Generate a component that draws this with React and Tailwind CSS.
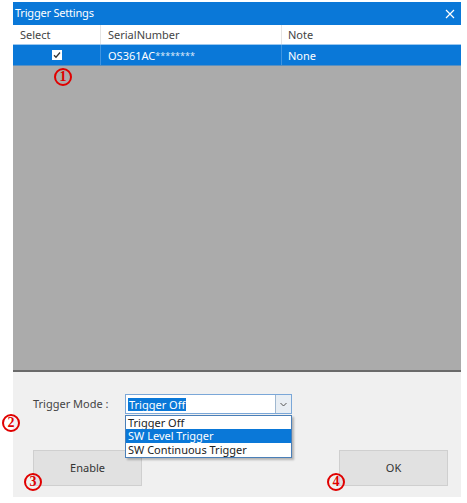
import React from "react";

const F = { fontFamily: '"Noto Sans", "Open Sans", sans-serif' };

function Mark({ children, className }) {
  return (
    <div
      className={
        "absolute w-[18px] h-[18px] rounded-full border-[2px] border-[#e00000] flex items-center justify-center text-[14px] leading-none font-bold text-[#e00000] " +
        className
      }
      style={{ fontFamily: '"Liberation Serif", serif' }}
    >
      {children}
    </div>
  );
}

export default function App() {
  return (
    <div className="relative w-[467px] h-[503px] bg-white overflow-hidden" style={F}>
      <div className="ml-[13px] pt-[2px] w-[448px] h-[497px] flex flex-col">
        {/* Title bar */}
        <div className="h-[23px] bg-[#0a78d8] flex items-center justify-between pl-[2px] pr-[6px]">
          <span className="text-[11px] text-white tracking-[-0.2px]">Trigger Settings</span>
          <svg width="10" height="10" viewBox="0 0 10 10">
            <path d="M1 1L9 9M9 1L1 9" stroke="white" strokeWidth="1.2" />
          </svg>
        </div>
        {/* Header */}
        <div className="h-[20px] bg-white flex text-[11px] text-[#444] border-b border-[#9cc8ef]">
          <div className="w-[87px] pl-[7px] flex items-center pt-[1px]">Select</div>
          <div className="w-px bg-[#e4e4e4]" />
          <div className="w-[180px] pl-[7px] flex items-center pt-[1px]">SerialNumber</div>
          <div className="w-px bg-[#e4e4e4]" />
          <div className="flex-1 pl-[6px] flex items-center pt-[1px]">Note</div>
        </div>
        {/* Selected row */}
        <div className="h-[21px] bg-[#0a78d8] flex text-[11px] text-white border-b border-[#5a90c0]">
          <div className="w-[87px] flex items-center justify-center">
            <div className="w-[10px] h-[10px] bg-white flex items-center justify-center">
              <svg width="8" height="8" viewBox="0 0 8 8">
                <path d="M1 4.2L3 6.2L7 1.5" stroke="#333" strokeWidth="1.3" fill="none" />
              </svg>
            </div>
          </div>
          <div className="w-px bg-[#3f94e0]" />
          <div className="w-[180px] pl-[7px] flex items-center pt-[2px]">
            OS361AC<span className="text-[9px] text-[#d8e8f8]">********</span>
          </div>
          <div className="w-px bg-[#3f94e0]" />
          <div className="flex-1 pl-[6px] flex items-center pt-[2px]">None</div>
        </div>
        {/* Gray area */}
        <div className="flex-1 bg-[#ababab] border-b-2 border-[#6a6a6a]" />
        {/* Bottom panel */}
        <div className="h-[125px] bg-[#f0f0f0] flex flex-col px-[20px] pt-[22px]">
          <div className="flex items-center h-[20px]">
            <span className="w-[92px] text-[11px] text-[#444]">Trigger Mode :</span>
            <div className="relative w-[167px] h-[20px] bg-white border border-[#7aa7d8] flex">
              <div className="flex-1 flex items-center pl-[2px]">
                <span className="bg-[#0a78d8] text-white text-[11px] leading-[13px] px-px">Trigger Off</span>
              </div>
              <div className="w-[16px] border-l border-[#a0b8d0] bg-[#e8eef4] flex items-center justify-center">
                <svg width="7" height="5" viewBox="0 0 7 5">
                  <path d="M0.5 1L3.5 4L6.5 1" stroke="#555" strokeWidth="1" fill="none" />
                </svg>
              </div>
              <div className="absolute left-[-1px] top-[20px] w-[167px] bg-white border border-[#4a7fb8] flex flex-col text-[11px] text-[#222] shadow-[2px_2px_2px_rgba(0,0,0,0.25)]">
                <div className="h-[13px] leading-[13px] pl-[2px]">Trigger Off</div>
                <div className="h-[14px] leading-[14px] pl-[2px] bg-[#0a78d8] text-white">SW Level Trigger</div>
                <div className="h-[14px] leading-[14px] pl-[2px]">SW Continuous Trigger</div>
              </div>
            </div>
          </div>
          <div className="flex justify-between mt-[36px]">
            <div className="w-[109px] h-[36px] bg-[#e1e1e1] border border-[#cfcfcf] flex items-center justify-center text-[11px] text-[#333]">
              Enable
            </div>
            <div className="w-[109px] h-[36px] bg-[#e1e1e1] border border-[#cfcfcf] flex items-center justify-center text-[11px] text-[#333] mr-[-7px]">
              OK
            </div>
          </div>
        </div>
      </div>
      <Mark className="left-[54px] top-[68px]">1</Mark>
      <Mark className="left-[2px] top-[414px]">2</Mark>
      <Mark className="left-[24px] top-[473px]">3</Mark>
      <Mark className="left-[327px] top-[473px]">4</Mark>
    </div>
  );
}
